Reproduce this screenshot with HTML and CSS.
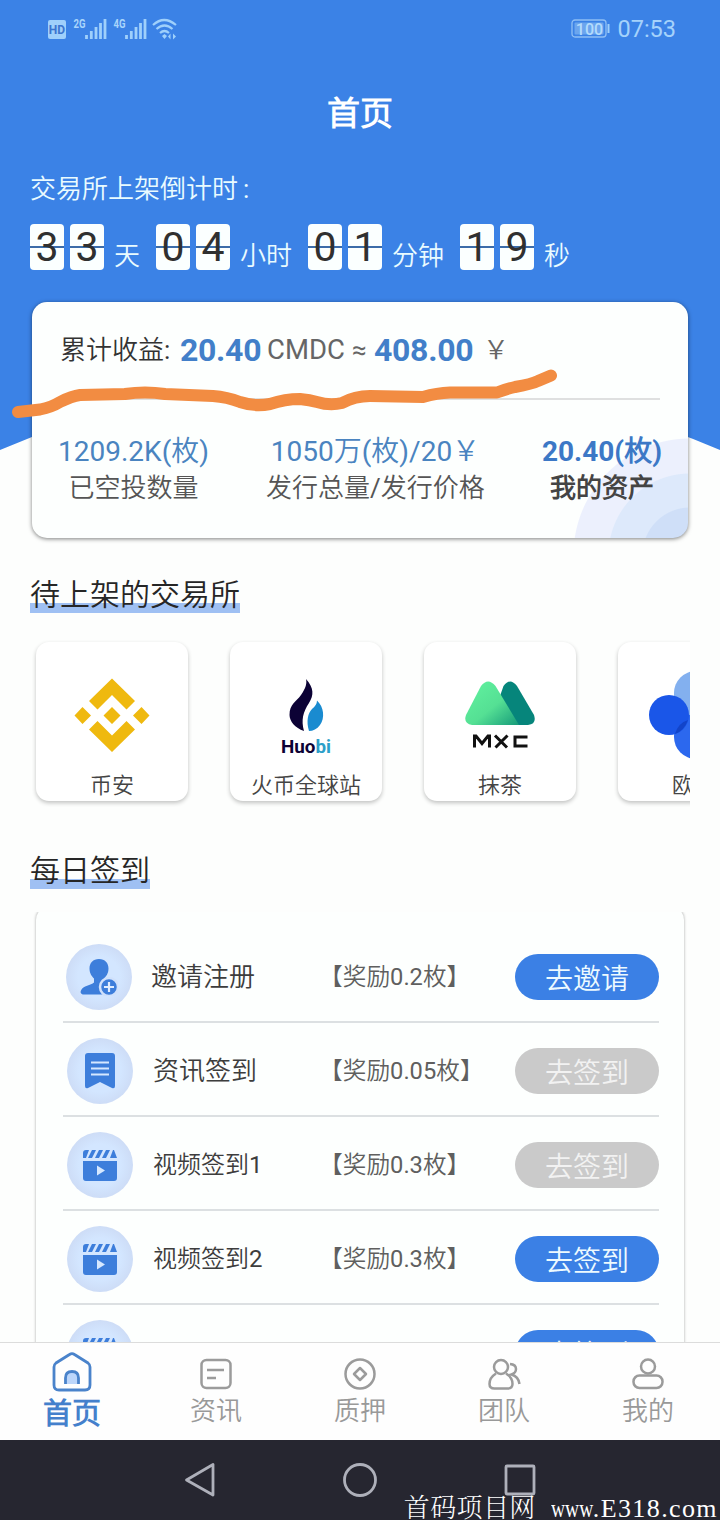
FILE: index.html
```html
<!DOCTYPE html>
<html lang="zh-CN">
<head>
<meta charset="utf-8">
<title>首页</title>
<link rel="stylesheet" href="styles.css">
</head>
<body>
<svg class="defs" width="0" height="0">
  <defs>
    <linearGradient id="mint" x1="0" y1="0" x2="1" y2="1">
      <stop offset="0" stop-color="#62f3a0"/><stop offset=".55" stop-color="#55e094"/><stop offset="1" stop-color="#159a79"/>
    </linearGradient>
    <symbol id="clapper" viewBox="0 0 34 32">
      <path fill="#3d7edb" d="M3 1h3L3 9H0V4a3 3 0 0 1 3-3zM9 1h4L9 9H5zM16 1h4l-4 8h-4zM23 1h4l-4 8h-4zM30 1h1l3 8h-7zM0 12h34v17a3 3 0 0 1-3 3H3a3 3 0 0 1-3-3z"/>
      <path fill="#d6e8ff" d="M14 16.500v10l8-5z"/>
    </symbol>
  </defs>
</svg>
<div class="phone">
  <header class="hero">
    <div class="status">
      <svg class="status-left" width="132" height="24" viewBox="0 0 132 24">
        <rect x="1" y="3" width="18" height="19" rx="2" fill="#9fd0fb"/>
        <text class="hd" x="10" y="17" text-anchor="middle">HD</text>
        <text class="gen" x="26.500" y="10.500" textLength="12" lengthAdjust="spacingAndGlyphs">2G</text>
        <text class="gen" x="66.500" y="10.500" textLength="12" lengthAdjust="spacingAndGlyphs">4G</text>
        <g stroke="#9fd0fb" stroke-width="2.800">
          <path d="M39.500 22v-4M44.300 22v-8M49 22v-12M53.500 22v-16M58 22v-20"/>
          <path d="M79.500 22v-4M84.300 22v-8M89 22v-12M93.500 22v-16M98 22v-20"/>
        </g>
        <g fill="none" stroke="#9fd0fb" stroke-width="2.200">
          <path d="M106 8q11-10 23 0M109.500 12q8-7 16 0M113 16q4.500-4 9 0"/>
        </g>
        <path fill="#9fd0fb" d="M115 19l2.500-2 2.500 2-2.500 3zM121 19.500l2.500-3v6zM126 16.500l3 3-3 3z"/>
      </svg>
      <div class="status-right">
        <svg width="40" height="20" viewBox="0 0 40 20">
          <rect x="1" y="1" width="34" height="17" rx="3" fill="none" stroke="#8fbff5" stroke-width="1.300"/>
          <rect x="3.500" y="3.500" width="29" height="12" rx="1" fill="#6ba5ee"/>
          <text class="batt" x="18.500" y="15.500" text-anchor="middle">100</text>
          <path d="M37.500 5v9" stroke="#9fd0fb" stroke-width="2"/>
        </svg>
        <span class="clock">07:53</span>
      </div>
    </div>
    <h1 class="title">首页</h1>
    <p class="countdown-label">交易所上架倒计时<span class="colon">:</span></p>
    <div class="countdown">
      <b class="digit">3</b><b class="digit">3</b><span class="unit">天</span>
      <b class="digit">0</b><b class="digit">4</b><span class="unit">小时</span>
      <b class="digit">0</b><b class="digit">1</b><span class="unit">分钟</span>
      <b class="digit">1</b><b class="digit">9</b><span class="unit">秒</span>
    </div>
  </header>

  <section class="balance">
    <div class="total">
      <span class="total-label">累计收益:</span><strong class="amount">20.40</strong><span class="coin">CMDC</span><span class="approx">≈</span><strong class="fiat">408.00</strong><span class="yen">￥</span>
    </div>
    <div class="stats">
      <div class="stat"><span class="num">1209.2K(枚)</span><span class="cap">已空投数量</span></div>
      <div class="stat"><span class="num">1050万(枚)/20￥</span><span class="cap">发行总量/发行价格</span></div>
      <div class="stat stat-mine"><span class="num">20.40(枚)</span><span class="cap">我的资产</span></div>
    </div>
    <svg class="marker" width="550" height="50" viewBox="10 366 550 50">
      <path d="M18 412L40 409.500Q52 407 60 402Q72 396 80 395L125 394Q145 391 165 394L213 396Q227 397 240 402Q255 407 270 404Q285 399 300 399Q310 400 317 402Q330 406 342 403Q355 396 370 396L423 397Q437 393 450 392.500H497Q506 389 515 387Q532 384 538 381L551 375.500"/>
    </svg>
  </section>

  <h2 class="heading">待上架的交易所</h2>
  <div class="exchanges">
    <article class="exchange">
      <svg width="100" height="100" viewBox="0 0 100 100" fill="#efb90f">
        <path d="M50 14.500L73 37l-8.500 8.500L50 31 35.500 45.500 27 37zM50 88L27 65.500l8.500-8.500L50 71.500l14.500-14.500L73 65.500zM50 43l8.500 8.500L50 60l-8.500-8.500zM20.500 43l8.500 8.500-8.500 8.500-8-8.500zM79.500 43l8 8.500-8 8.500-8.500-8.500z"/>
      </svg>
      <span class="ex-name">币安</span>
    </article>
    <article class="exchange">
      <svg width="100" height="100" viewBox="0 0 100 100">
        <path fill="#0c0235" d="M50 15C58 24 58 31 53 39C47 48 45 56 48 67C39 64 33.500 57 33.500 51C33.500 40 40 38 45 31C50 24 51 19 50 15z"/>
        <path fill="#1a8bd0" d="M61 36.500C68 43 69 54 64 61C61 65 57 67 53 67C50 57 52 49 56 45Q61 41 61 36.500z"/>
        <text class="huobi" x="25" y="88.500" textLength="50" lengthAdjust="spacingAndGlyphs"><tspan fill="#0c0235">Huo</tspan><tspan fill="#2c9fc9">bi</tspan></text>
      </svg>
      <span class="ex-name">火币全球站</span>
    </article>
    <article class="exchange">
      <svg width="100" height="100" viewBox="0 0 100 100">
        <g transform="translate(0 2)">
        <path fill="#06857b" d="M50 30L53.500 20Q60 11 67 20L84 49Q87 58 78 59H60z"/>
        <path fill="url(#mint)" d="M31 20Q38 11 45.500 20L69 59H22Q13 57 16 49z"/>
        </g>
        <g fill="none" stroke="#111" stroke-width="3" transform="translate(0 1.500)">
          <path d="M24.500 82V70.500H26L32 78l6-7.500h1.500V82M45 70l12 12M57.500 70l-12 12M77.500 71.500H65v9h12.500"/>
        </g>
      </svg>
      <span class="ex-name">抹茶</span>
    </article>
    <article class="exchange">
      <svg width="100" height="100" viewBox="0 0 100 100">
        <rect x="30" y="7" width="50" height="48" rx="22" fill="#83b0ef"/>
        <rect x="30" y="50" width="50" height="45" rx="22" fill="#2c68ee"/>
        <circle cx="25" cy="51" r="20" fill="#1a56e8"/>
        <path fill="#1244c9" d="M31 70Q34 59 44 56Q40 67 31 70z"/>
      </svg>
      <span class="ex-name">欧易</span>
    </article>
  </div>

  <h2 class="heading heading-daily">每日签到</h2>
  <div class="tasks">
    <div class="task-card">
      <div class="task task-first">
        <span class="badge"><svg width="38" height="38" viewBox="0 0 38 38">
          <path fill="#3d7edb" d="M19 1c6 0 9.500 4 9.500 9.500 0 5-2.500 8-4.500 10v4l3 3v9H4c-3 0-4-2-3-4 2-5 10-5 13-8v-4c-2-2-4.500-5-4.500-10C9.500 5 13 1 19 1z"/>
          <circle cx="29" cy="29" r="9" fill="#3d7edb" stroke="#d0e1fb" stroke-width="2.500"/>
          <path d="M24 29h10M29 24v10" stroke="#e0edff" stroke-width="2.200"/>
        </svg></span>
        <span class="name">邀请注册</span><span class="reward">【奖励0.2枚】</span><button class="go">去邀请</button>
      </div>
      <div class="task">
        <span class="badge"><svg width="32" height="36" viewBox="0 0 32 36">
          <path fill="#3d7edb" d="M4 0h24a3 3 0 0 1 3 3v30q0 3-3 2l-12-6-12 6q-3 1-3-2V3a3 3 0 0 1 3-3z"/>
          <path d="M7 9.500h18M7 15.500h18M7 21.500h18" stroke="#d6e8ff" stroke-width="2"/>
        </svg></span>
        <span class="name">资讯签到</span><span class="reward">【奖励0.05枚】</span><button class="go done">去签到</button>
      </div>
      <div class="task">
        <span class="badge"><svg width="34" height="32"><use href="#clapper"/></svg></span>
        <span class="name name-sm">视频签到1</span><span class="reward">【奖励0.3枚】</span><button class="go done">去签到</button>
      </div>
      <div class="task">
        <span class="badge"><svg width="34" height="32"><use href="#clapper"/></svg></span>
        <span class="name name-sm">视频签到2</span><span class="reward">【奖励0.3枚】</span><button class="go">去签到</button>
      </div>
      <div class="task">
        <span class="badge"><svg width="34" height="32"><use href="#clapper"/></svg></span>
        <span class="name name-sm"></span><span class="reward"></span><button class="go">去签到</button>
      </div>
    </div>
  </div>

  <nav class="tabs">
    <a class="tab active">
      <svg width="40" height="40" viewBox="0 0 40 40" fill="none" stroke="#4a83cb" stroke-width="2.800">
        <path d="M17.500 2.500Q20 .8 22.500 2.500L36 11Q38 12.500 38 15v18q0 5-5 5H7q-5 0-5-5V15q0-2.500 2-4z" />
        <path d="M13.500 32V26q0-6.500 6.500-6.500t6.500 6.500v6" fill="#bcd6fb"/>
      </svg><span>首页</span>
    </a>
    <a class="tab">
      <svg width="40" height="40" viewBox="0 0 40 40" fill="none" stroke="#9b9b9b" stroke-width="2.500">
        <rect x="5.500" y="7" width="29" height="28" rx="5"/><path d="M11 17h17M11 25h9"/>
      </svg><span>资讯</span>
    </a>
    <a class="tab">
      <svg width="40" height="40" viewBox="0 0 40 40" fill="none" stroke="#9b9b9b" stroke-width="2.500">
        <circle cx="20" cy="21" r="14.500"/><path d="M20 15l6 6-6 6-6-6z" stroke-linejoin="round"/>
      </svg><span>质押</span>
    </a>
    <a class="tab">
      <svg width="40" height="40" viewBox="0 0 40 40" fill="none" stroke="#9b9b9b" stroke-width="2.500">
        <circle cx="17" cy="14" r="7"/><path d="M12 20.500Q5.500 24.500 5.500 31q0 4.500 5 4.500h13q5 0 5-4.500Q28.500 24.500 22 20.500M26 11q6 .5 6 5 0 4-4.500 5.500 7 2 8 9.500"/>
      </svg><span>团队</span>
    </a>
    <a class="tab">
      <svg width="40" height="40" viewBox="0 0 40 40" fill="none" stroke="#9b9b9b" stroke-width="2.500">
        <circle cx="20" cy="13.500" r="7"/><rect x="5.500" y="22.500" width="29" height="12.500" rx="6"/>
      </svg><span>我的</span>
    </a>
  </nav>

  <footer class="sysbar">
    <svg width="40" height="40" viewBox="0 0 40 40"><path d="M33 4.500v30.500L6.500 20z"/></svg>
    <svg width="40" height="40" viewBox="0 0 40 40"><circle cx="20" cy="20" r="15.500"/></svg>
    <svg width="40" height="40" viewBox="0 0 40 40"><rect x="6" y="6" width="28" height="28" rx="1"/></svg>
  </footer>
  <div class="watermark"><span class="wm-cn">首码项目网</span><span class="wm-www">www</span><span class="wm-host">.E318.com</span></div>
</div>
</body>
</html>
```
FILE: styles.css
```css
* { box-sizing: border-box; }
body { margin: 0; background: #fdfefd; }
h1, h2, p { margin: 0; font-weight: 400; }
svg { display: block; flex: none; }
.defs { position: absolute; }

.phone {
  position: relative;
  display: flex;
  flex-direction: column;
  width: 720px;
  height: 1520px;
  overflow: hidden;
  background: #fdfefd;
  color: #333;
  font-family: Roboto, "Noto Sans CJK SC DemiLight", "Noto Sans CJK SC", sans-serif;
  white-space: nowrap;
}

.hero { height: 302px; flex: none; color: #e9fbff; }
.hero::before {
  content: "";
  position: absolute;
  inset: 0 0 auto 0;
  height: 460px;
  background: #3b82e6;
  clip-path: path("M0 0H720V450Q360 298 0 450Z");
}
.hero > * { position: relative; }

.status { display: flex; justify-content: space-between; height: 57px; padding: 17px 44px 0 47px; }
.status-right { display: flex; gap: 6px; padding-top: 2px; }
.clock { color: #a5d2fb; font-size: 23.500px; line-height: 21px; }
.hd { font: 700 12px Roboto, sans-serif; fill: #3b75cf; }
.gen { font: 700 12px Roboto, sans-serif; fill: #a9d5fb; }
.batt { font: 500 16px Roboto, sans-serif; fill: #b3dbfc; }

.title { text-align: center; font-size: 33px; line-height: 114px; font-weight: 700; color: #fff; }
.countdown-label { padding-left: 30px; font-size: 26px; line-height: 36px; }
.colon { padding-left: 5px; }
.countdown { display: flex; margin-top: 17px; padding-left: 30px; }
.digit {
  width: 34px;
  height: 46px;
  border-radius: 4px;
  background: linear-gradient(#fbffff 22px, #3c6ca9 22px, #3c6ca9 24px, #fbffff 24px);
  color: #303030;
  font-size: 41px;
  font-weight: 400;
  line-height: 47px;
  text-align: center;
}
.digit + .digit { margin-left: 6px; }
.unit { margin: 0 16px 0 10px; font-size: 26px; line-height: 64px; height: 46px; }

.balance {
  position: relative;
  flex: none;
  height: 236px;
  margin: 0 32px;
  padding: 0 28px;
  border-radius: 15px;
  background:
    radial-gradient(circle at 658px 253px, #cfdff8 47px, #dde9fb 48px, #dde9fb 81px, #ecf0fd 82px, #ecf0fd 116px, transparent 117px),
    #fdfffe;
  box-shadow: 0 1px 4px rgba(0, 0, 0, .5);
}
.total { display: flex; height: 98px; align-items: center; border-bottom: 2px solid #dfe0e0; line-height: 94px; }
.total-label { width: 120px; font-size: 26px; }
.amount, .fiat { color: #427fc9; font-size: 32px; }
.amount { width: 87px; letter-spacing: -.3px; }
.coin { width: 85px; font-size: 27.500px; color: #666; }
.approx { width: 22px; font-size: 26px; color: #666; }
.fiat { width: 109px; letter-spacing: -.3px; }
.yen { font-size: 26px; color: #666; }
.stats { display: flex; justify-content: space-between; margin: 34px -2px 0; }
.stat { display: flex; flex-direction: column; align-items: center; }
.num { font-size: 28px; line-height: 36px; color: #4a84c0; }
.cap { font-size: 26px; line-height: 37px; color: #555; }
.stat-mine { font-weight: 700; }
.stat-mine .num { color: #3c78c6; }
.stat-mine .cap { color: #444; }
.marker { position: absolute; left: -22px; top: 64px; overflow: visible; fill: none; stroke: #f28c42; stroke-width: 12px; stroke-linecap: round; stroke-linejoin: round; }

.heading {
  flex: none;
  align-self: flex-start;
  height: 39px;
  margin: 36px 0 0 30px;
  font-size: 30px;
  line-height: 41px;
  color: #262626;
  background: linear-gradient(transparent 29px, #9fc0f3 29px);
}
.heading-daily { margin-top: 40px; }

.exchanges { display: flex; flex: none; gap: 42px; height: 170px; margin: 27px 30px 0; padding: 2px 6px; overflow: hidden; }
.exchange {
  display: flex;
  flex: none;
  flex-direction: column;
  align-items: center;
  width: 152px;
  height: 159px;
  padding-top: 22px;
  border-radius: 13px;
  background: #fff;
  box-shadow: 0 2px 4px rgba(0, 0, 0, .24);
}
.ex-name { font-size: 22px; line-height: 43px; color: #444; }
.huobi { font: 700 19px Roboto, sans-serif; }

.tasks { flex: none; height: 430px; margin-top: 23px; padding: 0 36px; overflow: hidden; }
.task-card { height: 600px; margin-top: -6px; padding: 23px 25px 0 27px; border-radius: 14px; background: #fdfffe; box-shadow: 0 0 3px rgba(0, 0, 0, .35); }
.task { display: grid; grid-template-columns: 90px 166px 196px 144px; align-items: center; height: 94px; padding-top: 3px; border-bottom: 2px solid #dce0e2; }
.badge {
  display: flex;
  align-items: center;
  justify-content: center;
  width: 66px;
  height: 66px;
  margin-left: 4px;
  border-radius: 50%;
  background: radial-gradient(circle, #d3e6ff 45%, #cddcf6 72%);
}
.name { font-size: 26px; line-height: 36px; color: #3d3d3d; }
.name-sm { font-size: 24px; }
.task-first .badge { margin-left: 3px; }
.task-first .name { margin-left: -2px; }
.reward { font-size: 23.700px; line-height: 36px; color: #5f5f5f; }
.go { width: 144px; height: 46px; padding: 5px 0 0; border: 0; border-radius: 23px; background: #3b80e5; color: #edfaff; font: inherit; font-size: 28px; line-height: 41px; }
.done { background: #cacaca; color: #f2f2f2; }

.tabs { display: flex; flex: none; height: 98px; border-top: 1px solid #dcdcdc; background: #fefefe; }
.tab { display: flex; flex: 1; flex-direction: column; align-items: center; padding-top: 10px; color: #999; font-size: 26px; line-height: 37px; }
.active { padding-top: 9px; color: #4480cc; font-size: 29px; font-weight: 700; line-height: 44px; }

.sysbar { display: flex; flex: none; justify-content: center; gap: 120px; height: 80px; padding-top: 20px; background: #262630; }
.sysbar svg { fill: none; stroke: #aeb0ba; stroke-width: 2.800px; stroke-linejoin: round; }

.watermark { position: absolute; right: 2px; bottom: -6px; display: flex; align-items: baseline; color: #fff; font: 26px/34px "Liberation Serif", "Noto Sans CJK SC DemiLight", "Noto Sans CJK SC", serif; }
.wm-cn { margin-right: 15px; font-family: "Noto Serif CJK SC", "Noto Sans CJK SC", serif; font-weight: 300; letter-spacing: .4px; }
.wm-www { width: 42px; transform: scaleX(.75); transform-origin: left; }
.wm-host { letter-spacing: 1.400px; }
```
